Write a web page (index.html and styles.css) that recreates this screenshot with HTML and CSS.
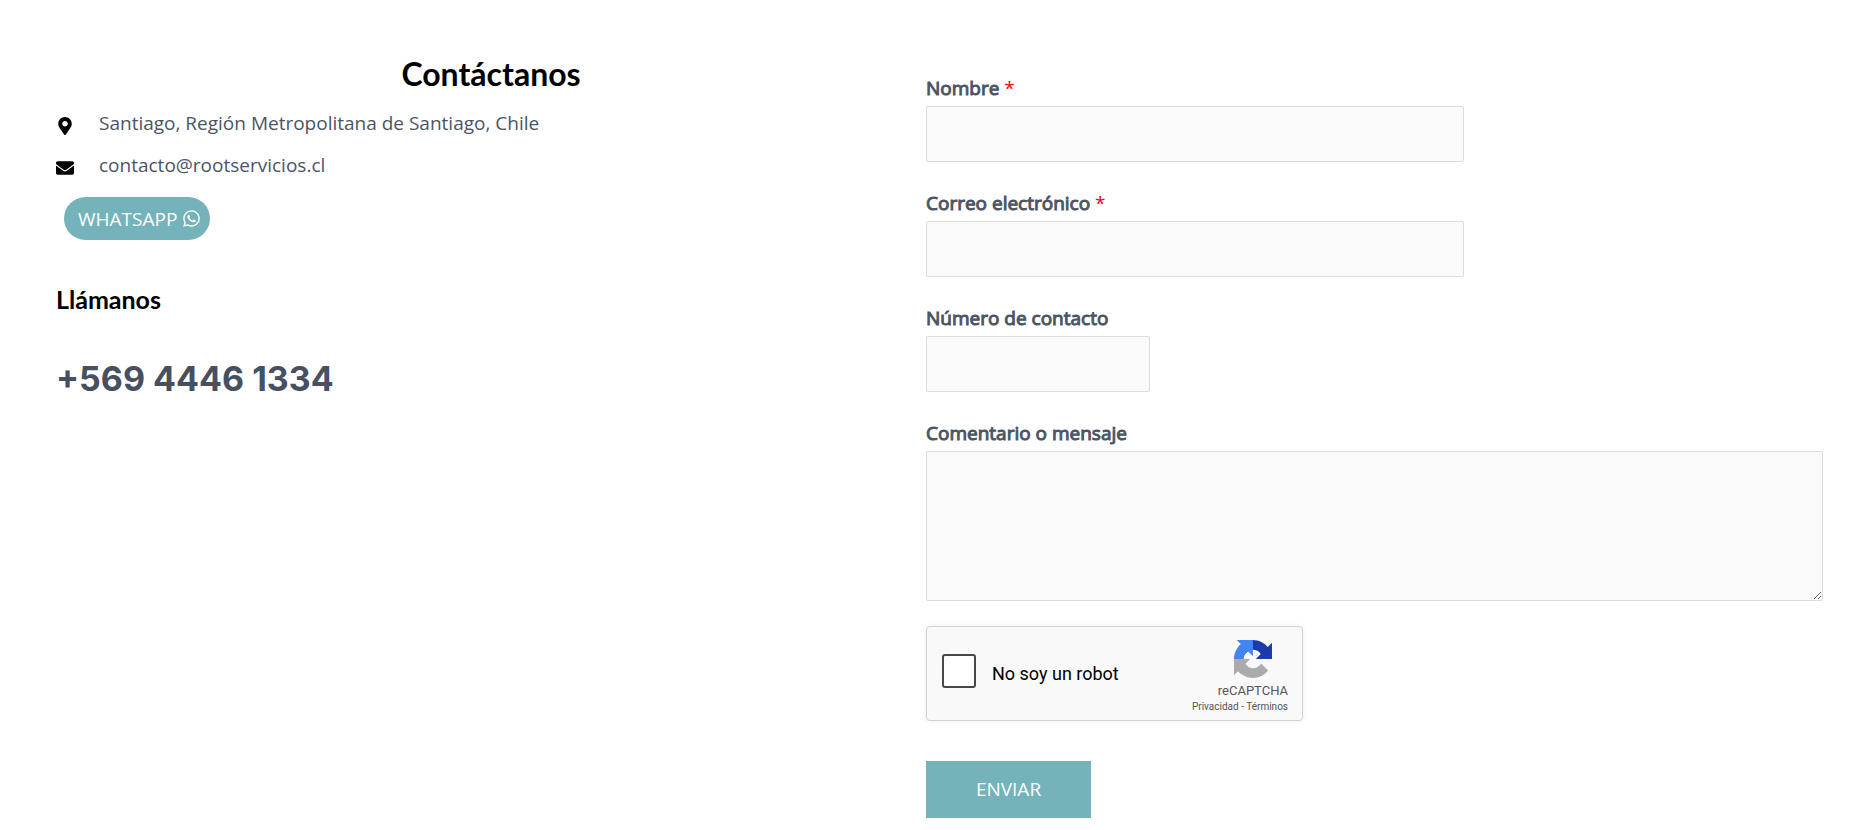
FILE: index.html
```html
<!DOCTYPE html>
<html lang="es">
<head>
    <meta charset="UTF-8">
    <meta name="viewport" content="width=device-width, initial-scale=1.0">
    <title>Contacto - Root Servicios</title>
    <link rel="stylesheet" href="styles.css">
</head>
<body>
    <main class="contact">
        <!-- Contact details -->
        <section class="contact-info">
            <h2 class="contact-title">Contáctanos</h2>
            <ul class="contact-list">
                <li>
                    <svg class="list-icon" viewBox="0 0 384 512" aria-hidden="true"><path d="M172.268 501.67C26.97 291.031 0 269.413 0 192 0 85.961 85.961 0 192 0s192 85.961 192 192c0 77.413-26.97 99.031-172.268 309.67-9.535 13.774-29.93 13.773-39.464 0zM192 272c44.183 0 80-35.817 80-80s-35.817-80-80-80-80 35.817-80 80 35.817 80 80 80z"/></svg>
                    <span>Santiago, Región Metropolitana de Santiago, Chile</span>
                </li>
                <li>
                    <svg class="list-icon" viewBox="0 0 512 512" aria-hidden="true"><path d="M502.3 190.8c3.900-3.100 9.700-.2 9.700 4.700V400c0 26.500-21.500 48-48 48H48c-26.500 0-48-21.500-48-48V195.600c0-5 5.700-7.800 9.700-4.700 22.400 17.400 52.100 39.500 154.100 113.600 21.100 15.400 56.700 47.800 92.200 47.600 35.700.3 72-32.800 92.300-47.600 102-74.100 131.600-96.300 154-113.700zM256 320c23.200.4 56.600-29.200 73.400-41.400 132.700-96.300 142.800-104.700 173.400-128.700 5.800-4.500 9.200-11.500 9.200-18.900v-19c0-26.500-21.500-48-48-48H48c-26.500 0-48 21.500-48 48v19c0 7.400 3.400 14.300 9.200 18.900 30.600 23.900 40.700 32.400 173.400 128.700 16.800 12.200 50.200 41.800 73.400 41.400z"/></svg>
                    <span>contacto@rootservicios.cl</span>
                </li>
            </ul>
            <a class="whatsapp-btn" href="#">WHATSAPP
                <svg class="whatsapp-icon" viewBox="0 0 448 512" aria-hidden="true"><path d="M380.900 97.100C339 55.100 283.200 32 223.900 32c-122.400 0-222 99.600-222 222 0 39.100 10.200 77.300 29.600 111L0 480l117.700-30.900c32.400 17.700 68.900 27 106.100 27h.1c122.300 0 224.100-99.600 224.100-222 0-59.300-25.200-115-67.100-157zm-157 341.600c-33.200 0-65.700-8.900-94-25.700l-6.700-4-69.800 18.300L72 359.200l-4.400-7c-18.500-29.400-28.200-63.300-28.200-98.200 0-101.700 82.800-184.500 184.600-184.500 49.300 0 95.600 19.200 130.400 54.100 34.800 34.900 56.200 81.200 56.100 130.500 0 101.800-84.900 184.600-186.600 184.600zm101.200-138.200c-5.500-2.800-32.800-16.200-37.900-18-5.100-1.900-8.800-2.800-12.500 2.800-3.700 5.600-14.300 18-17.600 21.800-3.200 3.700-6.500 4.200-12 1.400-32.600-16.300-54-29.100-75.500-66-5.700-9.800 5.700-9.100 16.300-30.300 1.800-3.700.9-6.900-.5-9.700-1.400-2.800-12.500-30.100-17.100-41.200-4.500-10.800-9.100-9.300-12.500-9.500-3.200-.2-6.900-.2-10.600-.2-3.700 0-9.700 1.400-14.800 6.900-5.100 5.600-19.400 19-19.400 46.300 0 27.300 19.900 53.700 22.600 57.400 2.800 3.700 39.100 59.700 94.800 83.800 35.200 15.200 49 16.500 66.600 13.900 10.700-1.600 32.800-13.400 37.400-26.400 4.600-13 4.600-24.100 3.200-26.400-1.300-2.500-5-3.900-10.500-6.600z"/></svg>
            </a>
            <h3 class="call-title">Llámanos</h3>
            <p class="phone">+569 4446 1334</p>
        </section>

        <!-- Contact form -->
        <form class="contact-form">
            <div class="form-group">
                <label for="nombre">Nombre <span class="required">*</span></label>
                <input type="text" id="nombre" name="nombre" required>
            </div>
            <div class="form-group">
                <label for="correo">Correo electrónico <span class="required">*</span></label>
                <input type="email" id="correo" name="correo" required>
            </div>
            <div class="form-group">
                <label for="numero">Número de contacto</label>
                <input type="tel" id="numero" name="numero" class="field-small">
            </div>
            <div class="form-group">
                <label for="mensaje">Comentario o mensaje</label>
                <textarea id="mensaje" name="mensaje"></textarea>
            </div>

            <div class="captcha">
                <input type="checkbox" id="robot" name="robot" class="captcha-check">
                <label for="robot" class="captcha-label">No soy un robot</label>
                <div class="captcha-brand">
                    <svg class="captcha-logo" viewBox="0 0 64 64" aria-hidden="true">
                        <path fill="#1c3aa9" d="M64 31.955l-.033-1.370V4.687l-7.160 7.160C50.948 4.674 42.033.093 32.050.093c-10.400 0-19.622 4.960-25.458 12.640l11.736 11.860a15.550 15.550 0 0 1 4.754-5.334c2.050-1.600 4.952-2.906 8.968-2.906.485 0 .860.057 1.135.163 4.976.393 9.288 3.140 11.828 7.124l-8.307 8.307L64 31.953"/>
                        <path fill="#4285f4" d="M31.862.094l-1.370.033H4.594l7.160 7.160C4.580 13.147 0 22.060 0 32.046c0 10.400 4.960 19.622 12.640 25.458L24.500 45.768a15.550 15.550 0 0 1-5.334-4.754c-1.600-2.050-2.906-4.952-2.906-8.968 0-.485.057-.860.163-1.135.393-4.976 3.140-9.288 7.124-11.828l8.307 8.307L31.860.095"/>
                        <path fill="#ababab" d="M.001 32.045l.033 1.370v25.898l7.160-7.160c5.860 7.173 14.774 11.754 24.760 11.754 10.400 0 19.622-4.960 25.458-12.640l-11.736-11.860a15.550 15.550 0 0 1-4.754 5.334c-2.050 1.600-4.952 2.906-8.968 2.906-.485 0-.860-.057-1.135-.163-4.976-.393-9.288-3.140-11.828-7.124l8.307-8.307c-10.522.040-22.400.066-27.295-.005"/>
                    </svg>
                    <span class="captcha-name">reCAPTCHA</span>
                    <span class="captcha-links"><a href="#">Privacidad</a> - <a href="#">Términos</a></span>
                </div>
            </div>

            <button type="submit" class="submit-btn">ENVIAR</button>
        </form>
    </main>
</body>
</html>
```

FILE: styles.css
```css
* {
    box-sizing: border-box;
}

body {
    margin: 0;
    background-color: #fff;
    color: #4b5563;
    font-family: "Open Sans", sans-serif;
    font-size: 19px;
    line-height: 32px;
}

/* Two columns: details and form */
.contact {
    display: grid;
    grid-template-columns: 870fr 897fr;
    padding: 56px 43px 12px 56px;
}

/* Contact details */
.contact-title {
    margin: 0 0 15px;
    color: #000;
    font-family: Lato, sans-serif;
    font-size: 32px;
    line-height: 36px;
    text-align: center;
}

.contact-list {
    display: flex;
    flex-direction: column;
    gap: 10px;
    margin: 0;
    padding: 0;
    list-style: none;
}

.contact-list li {
    display: flex;
    gap: 25px;
}

.list-icon {
    width: 18px;
    height: 18px;
    margin-top: 10px;
    fill: #000;
}

.whatsapp-btn {
    display: inline-flex;
    align-items: center;
    gap: 6px;
    height: 43px;
    margin: 16px 0 0 8px;
    padding: 0 10px 0 14px;
    border-radius: 22px;
    background-color: #74b3ba;
    color: #fff;
    text-decoration: none;
}

.whatsapp-icon {
    width: 17px;
    height: 19px;
    fill: #fff;
}

.call-title {
    margin: 43px 0 0;
    color: #000;
    font-family: Lato, sans-serif;
    font-size: 25px;
    line-height: 32px;
}

.phone {
    margin: 40px 0 0;
    color: #475060;
    font-family: Inter, sans-serif;
    font-size: 34px;
    font-weight: 700;
    line-height: 48px;
}

/* Contact form */
.contact-form {
    padding-top: 16px;
}

.form-group {
    display: flex;
    flex-direction: column;
    align-items: flex-start;
    gap: 2px;
    margin-bottom: 25px;
}

.form-group label {
    -webkit-text-stroke: 1px currentColor;
}

.form-group .required {
    color: #f00;
    -webkit-text-stroke: 0;
}

.form-group input,
.form-group textarea {
    width: 60%;
    height: 56px;
    padding: 12px;
    border: 1px solid #ddd;
    border-radius: 2px;
    background-color: #fafafa;
    font: inherit;
}

.form-group .field-small {
    width: 25%;
}

.form-group textarea {
    width: 100%;
    height: 150px;
    resize: vertical;
}

/* Captcha box */
.captcha {
    display: flex;
    align-items: center;
    width: 377px;
    max-width: 100%;
    height: 95px;
    padding: 0 14px 0 15px;
    border: 1px solid #d3d3d3;
    border-radius: 4px;
    background-color: #f9f9f9;
    box-shadow: 0 0 5px rgba(0, 0, 0, 0.08);
    color: #555;
    font-family: Roboto, sans-serif;
}

.captcha-check {
    appearance: none;
    width: 34px;
    height: 34px;
    margin: 0 16px 6px 0;
    border: 2px solid #484848;
    border-radius: 3px;
    background-color: #fff;
}

.captcha-label {
    color: #000;
    font-size: 18px;
}

.captcha-brand {
    display: flex;
    flex-direction: column;
    align-items: flex-end;
    margin-left: auto;
    padding-top: 6px;
}

.captcha-logo {
    width: 38px;
    height: 38px;
    margin: 0 16px 4px 0;
}

.captcha-name {
    font-size: 13px;
    line-height: 18px;
}

.captcha-links {
    font-size: 10px;
    line-height: 14px;
}

.captcha-links a {
    color: inherit;
    text-decoration: none;
}

.submit-btn {
    width: 165px;
    height: 57px;
    margin-top: 40px;
    padding-bottom: 3px;
    border: none;
    background-color: #74b3ba;
    color: #fff;
    font: inherit;
    cursor: pointer;
}
```
